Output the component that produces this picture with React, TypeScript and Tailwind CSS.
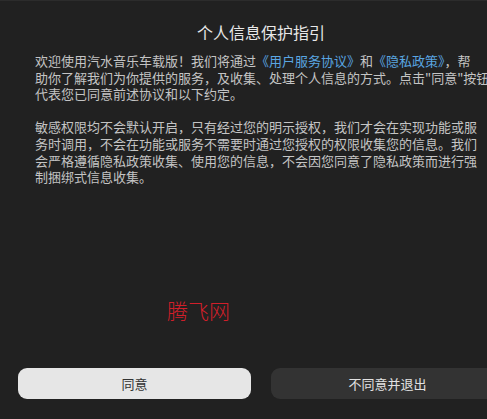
const FONT = "font-['Noto_Sans_CJK_SC','Noto_Sans',sans-serif]";

function Link({ children }: { children: string }) {
  return <span className="text-[#5aa6e2]">{children}</span>;
}

export default function App() {
  return (
    <div className={`w-full h-[419px] overflow-hidden bg-[#212121] ${FONT}`}>
      <div className="relative w-[522px] h-full flex flex-col border-t border-[#2c2c2c]">
        <h1 className="pt-[19px] text-center text-[16px] leading-6 text-[#e8e8e8]">个人信息保护指引</h1>

        <div className="mt-[9px] pl-[35px] text-[13px] leading-[16.6px] text-[#c4c4c4] whitespace-nowrap">
          <p>
            欢迎使用汽水音乐车载版！我们将通过<Link>《用户服务协议》</Link>和<Link>《隐私政策》</Link>，帮
            <br />
            助你了解我们为你提供的服务，及收集、处理个人信息的方式。点击"同意"按钮
            <br />
            代表您已同意前述协议和以下约定。
          </p>
          <p className="mt-[16.6px]">
            敏感权限均不会默认开启，只有经过您的明示授权，我们才会在实现功能或服
            <br />
            务时调用，不会在功能或服务不需要时通过您授权的权限收集您的信息。我们
            <br />
            会严格遵循隐私政策收集、使用您的信息，不会因您同意了隐私政策而进行强
            <br />
            制捆绑式信息收集。
          </p>
        </div>

        {/* watermark */}
        <span className="absolute left-[167px] top-[296px] text-[21px] leading-[26px] font-light text-[#d11f2a]">
          腾飞网
        </span>

        <div className="mt-auto mb-[20px] px-[18px] flex gap-[20px]">
          <button className="w-[233px] h-[31px] rounded-[9px] bg-[#e6e6e6] text-[13px] text-[#333]">同意</button>
          <button className="w-[233px] h-[31px] rounded-[9px] bg-[#333333] text-[13px] text-[#e2e2e2]">不同意并退出</button>
        </div>
      </div>
    </div>
  );
}
